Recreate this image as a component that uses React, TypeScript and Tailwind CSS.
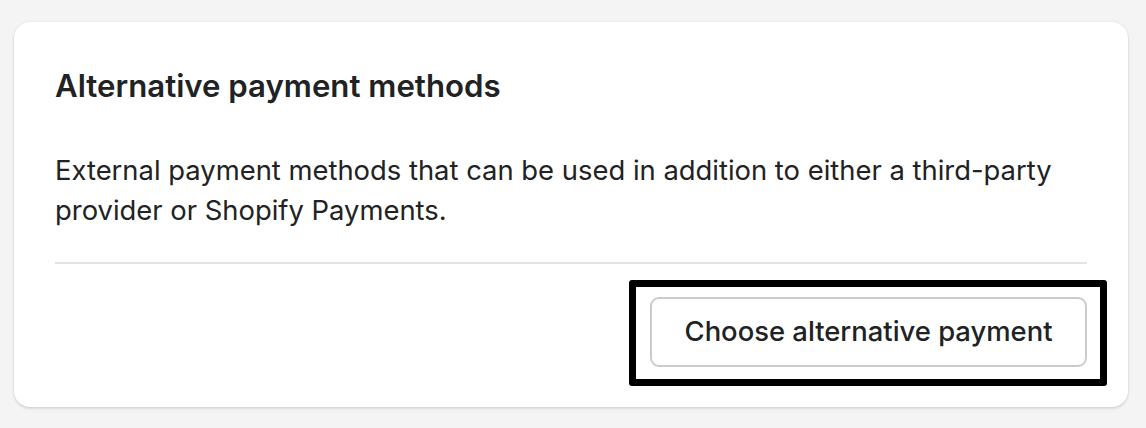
import React from "react";

export default function App() {
  return (
    <div
      className="w-[1146px] h-[428px] bg-[#f4f4f4] pt-[22px] pl-[14px]"
      style={{ fontFamily: "Inter, 'Noto Sans', sans-serif" }}
    >
      <div className="w-[1114px] h-[385px] bg-white rounded-[16px] shadow-[0_0_2px_rgba(0,0,0,0.12),0_2px_3px_rgba(0,0,0,0.1)] px-[41px] pt-[40px] text-[#202223]">
        <h2 className="text-[31.2px] leading-[48px] font-semibold">
          Alternative payment methods
        </h2>
        <p className="mt-[40px] text-[27.4px] leading-[40px]">
          External payment methods that can be used in addition to either a third-party provider or Shopify Payments.
        </p>
        <div className="mt-[32px] h-[2px] bg-[#e1e3e5]" />
        <div className="flex justify-end pt-[33px]">
          <div className="relative">
            <div className="absolute -top-[17px] -left-[21px] -right-[20px] -bottom-[19px] border-[7px] border-black rounded-[3px]" />
            <button className="relative w-[437px] h-[70px] rounded-[9px] border-2 border-[#c9cccf] bg-white text-[27.4px] font-medium text-[#202223]">
              Choose alternative payment
            </button>
          </div>
        </div>
      </div>
    </div>
  );
}
